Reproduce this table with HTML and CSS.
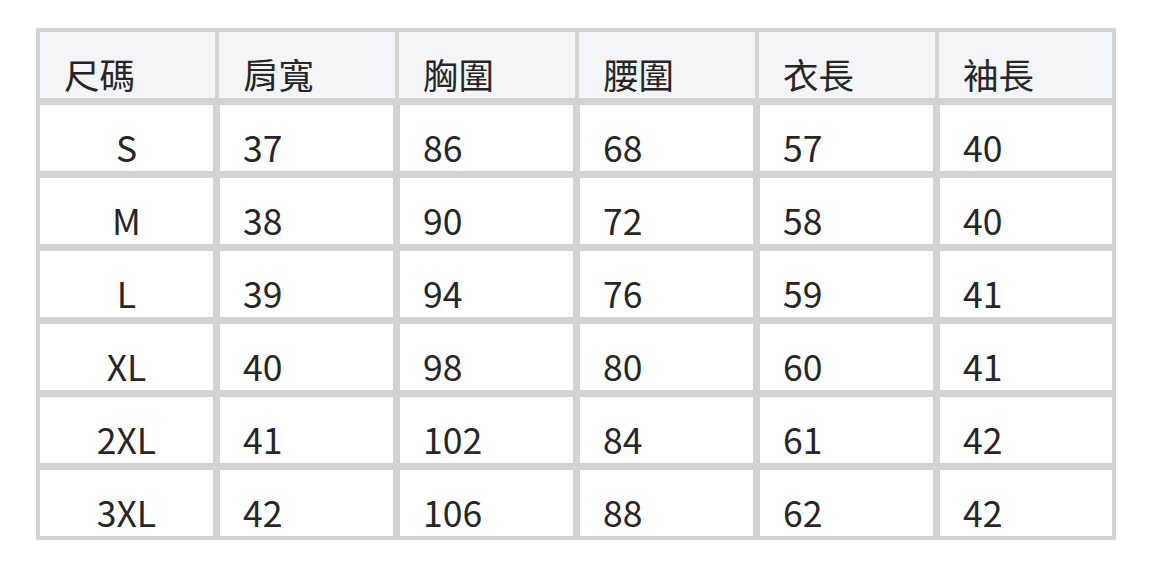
FILE: index.html
```html
<!DOCTYPE html>
<html lang="zh-Hant">
<head>
<meta charset="utf-8">
<link rel="stylesheet" href="styles.css">
</head>
<body>
<div class="page">
<table class="size-table">
  <colgroup>
    <col class="c1"><col class="cm"><col class="cm"><col class="cm"><col class="cm"><col class="c6">
  </colgroup>
  <thead>
    <tr><th>尺碼</th><th>肩寬</th><th>胸圍</th><th>腰圍</th><th>衣長</th><th>袖長</th></tr>
  </thead>
  <tbody>
    <tr><td>S</td><td>37</td><td>86</td><td>68</td><td>57</td><td>40</td></tr>
    <tr><td>M</td><td>38</td><td>90</td><td>72</td><td>58</td><td>40</td></tr>
    <tr><td>L</td><td>39</td><td>94</td><td>76</td><td>59</td><td>41</td></tr>
    <tr><td>XL</td><td>40</td><td>98</td><td>80</td><td>60</td><td>41</td></tr>
    <tr><td>2XL</td><td>41</td><td>102</td><td>84</td><td>61</td><td>42</td></tr>
    <tr><td>3XL</td><td>42</td><td>106</td><td>88</td><td>62</td><td>42</td></tr>
  </tbody>
</table>
</div>
</body>
</html>
```
FILE: styles.css
```css
html, body {
  margin: 0;
  padding: 0;
  background: #ffffff;
}

.page {
  padding: 28px 0 0 36px;
}

.size-table {
  table-layout: fixed;
  width: 1080px;
  border-collapse: separate;
  border-spacing: 0;
  border: 4px solid #d3d3d3;
  font-family: "Noto Sans CJK TC", "Noto Sans", sans-serif;
  font-size: 35.5px;
  color: #262626;
}

.c1 { width: 177px; }
.cm { width: 180px; }
.c6 { width: 175px; }

.size-table th,
.size-table td {
  box-sizing: border-box;
  line-height: 40px;
  text-align: left;
  font-weight: 400;
  white-space: nowrap;
}

.size-table th {
  background: #f4f5f9;
  padding: 22px 0 4px 24px;
  border-left: 2px solid #d3d3d3;
  border-right: 2px solid #d3d3d3;
}

.size-table th:first-child { border-left: 0; }
.size-table th:last-child { border-right: 0; }

.size-table td {
  background: #ffffff;
  padding: 22px 0 4px 23px;
  border-top: 7px solid #d3d3d3;
  border-left: 3px solid #d3d3d3;
  border-right: 4px solid #d3d3d3;
}

.size-table td:first-child {
  border-left: 0;
  text-align: center;
  padding-left: 0;
}

.size-table td:last-child { border-right: 0; }
```
